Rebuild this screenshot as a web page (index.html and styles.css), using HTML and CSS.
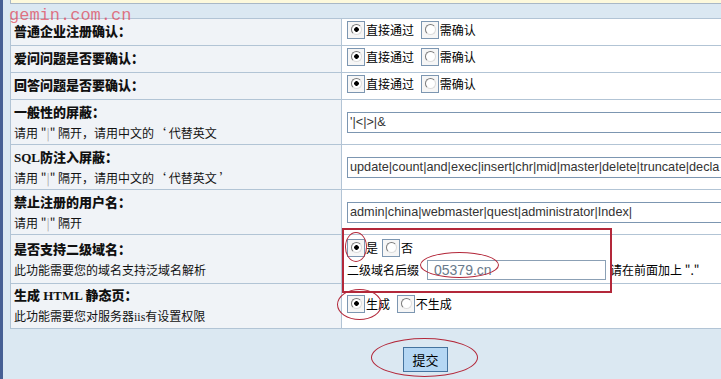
FILE: index.html
```html
<!DOCTYPE html>
<html lang="zh-CN">

<head>
	<meta charset="UTF-8">
	<title>注册设置</title>
	<link rel="stylesheet" href="styles.css">
</head>

<body>
	<div class="page">
		<div class="notice"></div>
		<table class="config">
			<colgroup>
				<col class="config__col-label">
				<col>
			</colgroup>
			<!--注册确认-->
			<tr class="row-s">
				<td class="config__label"><b>普通企业注册确认：</b></td>
				<td class="config__value">
					<label class="opt"><span class="opt__box"><input type="radio" name="r1" checked></span>直接通过</label>
					<label class="opt"><span class="opt__box"><input type="radio" name="r1"></span>需确认</label>
				</td>
			</tr>
			<tr class="row-s">
				<td class="config__label"><b>爱问问题是否要确认：</b></td>
				<td class="config__value">
					<label class="opt"><span class="opt__box"><input type="radio" name="r2" checked></span>直接通过</label>
					<label class="opt"><span class="opt__box"><input type="radio" name="r2"></span>需确认</label>
				</td>
			</tr>
			<tr class="row-s">
				<td class="config__label"><b>回答问题是否要确认：</b></td>
				<td class="config__value">
					<label class="opt"><span class="opt__box"><input type="radio" name="r3" checked></span>直接通过</label>
					<label class="opt"><span class="opt__box"><input type="radio" name="r3"></span>需确认</label>
				</td>
			</tr>
			<!--屏蔽-->
			<tr class="row-m">
				<td class="config__label">
					<b>一般性的屏蔽：</b>
					<div class="config__tip">请用 "<span class="pipe">|</span>" 隔开，请用中文的‘ 代替英文</div>
				</td>
				<td class="config__value"><input class="field" type="text" value="'|<|>|&"></td>
			</tr>
			<tr class="row-m">
				<td class="config__label">
					<b>SQL防注入屏蔽：</b>
					<div class="config__tip">请用 "<span class="pipe">|</span>" 隔开，请用中文的‘ 代替英文 ’</div>
				</td>
				<td class="config__value"><input class="field" type="text" value="update|count|and|exec|insert|chr|mid|master|delete|truncate|decla"></td>
			</tr>
			<tr class="row-m">
				<td class="config__label">
					<b>禁止注册的用户名：</b>
					<div class="config__tip">请用 "<span class="pipe">|</span>" 隔开</div>
				</td>
				<td class="config__value"><input class="field" type="text" value="admin|china|webmaster|quest|administrator|Index|"></td>
			</tr>
			<!--二级域名-->
			<tr class="row-l">
				<td class="config__label">
					<b>是否支持二级域名：</b>
					<div class="config__tip">此功能需要您的域名支持泛域名解析</div>
				</td>
				<td class="config__value">
					<div class="line">
						<label class="opt"><span class="opt__box"><input type="radio" name="r4" checked></span>是</label>
						<label class="opt"><span class="opt__box"><input type="radio" name="r4"></span>否</label>
					</div>
					<div class="line">
						<span>二级域名后缀</span>
						<input class="domain" type="text" value="05379.cn">
						<span>请在前面加上 "."</span>
					</div>
				</td>
			</tr>
			<tr class="row-m">
				<td class="config__label">
					<b>生成 HTML 静态页：</b>
					<div class="config__tip">此功能需要您对服务器<span class="latin">iis</span>有设置权限</div>
				</td>
				<td class="config__value">
					<label class="opt"><span class="opt__box"><input type="radio" name="r5" checked></span>生成</label>
					<label class="opt"><span class="opt__box"><input type="radio" name="r5"></span>不生成</label>
				</td>
			</tr>
		</table>
		<div class="submit">
			<button class="submit__btn">提交</button>
		</div>
	</div>

	<!--水印和标注-->
	<div class="mark">gemin.com.cn</div>
	<div class="note note--rect"></div>
	<div class="note note--yes"></div>
	<div class="note note--domain"></div>
	<div class="note note--html"></div>
	<div class="note note--btn"></div>
</body>

</html>
```

FILE: styles.css
```css
* {
	margin: 0;
	padding: 0;
	box-sizing: border-box;
}

body {
	position: relative;
	width: 721px;
	height: 379px;
	overflow: hidden;
	font-family: "Noto Sans CJK SC", sans-serif;
	font-size: 12px;
	color: #000;
}

.page {
	height: 379px;
	padding-left: 7px;
	border-left: 3px solid #465f94;
	background: #dbe8f2;
}

.notice {
	width: 711px;
	height: 4px;
	margin-bottom: 14px;
	background: #fdf9dc;
	border: solid 1px #a9b8c6;
	border-top: none;
	border-right: none;
}

.config {
	width: 711px;
	table-layout: fixed;
	border-collapse: collapse;
	border: solid 1px #b2c4d5;
	border-right: none;
}

.config__col-label {
	width: 331px;
}

.config td {
	border: solid 1px #b2c4d5;
	vertical-align: middle;
	overflow: hidden;
}

.config td.config__value {
	border-right: none;
}

.row-s td {
	height: 27px;
}

.row-m td {
	height: 45px;
}

.row-l td {
	height: 49px;
}

.config__label {
	padding-left: 3px;
	background: #f0f3f7;
	font-family: "Liberation Serif", "Noto Sans CJK SC", serif;
	line-height: 19px;
	color: #111;
}

.config__label b {
	font-size: 13px;
	font-weight: 900;
}

.config__tip {
	font-size: 12px;
	font-family: "Noto Sans CJK SC", sans-serif;
}

.pipe {
	color: #aaa;
}

.latin {
	font-family: "Liberation Serif", serif;
}

.config__value {
	padding-left: 5px;
	background: #fff;
	line-height: 18px;
	white-space: nowrap;
}

.opt {
	display: inline-flex;
	align-items: center;
	margin-right: 4px;
}

.opt__box {
	display: inline-block;
	width: 18px;
	height: 18px;
	margin-right: 1px;
	border: solid 1px #7c96b1;
	background: #f6f6f6;
}

.opt__box input {
	appearance: none;
	display: block;
	width: 11px;
	height: 11px;
	margin: 2px 0 0 3px;
	border-radius: 50%;
	border: solid 1px;
	border-color: #7a7a7a #dcdcdc #dcdcdc #7a7a7a;
	background: #fff;
}

.opt__box input:checked {
	background: radial-gradient(circle, #000 0, #000 2px, #fff 2.6px);
}

.field {
	display: block;
	width: 420px;
	height: 21px;
	padding: 0 2px;
	border: solid 1px #7c96b1;
	font-family: "Liberation Sans", sans-serif;
	font-size: 12.7px;
	color: #333;
}

.line {
	height: 21px;
	display: flex;
	align-items: center;
}

.line + .line {
	margin-top: 1px;
}

.domain {
	width: 179px;
	height: 20px;
	margin: 0 4px 0 8px;
	padding-left: 6px;
	border: solid 1px #8ba0b5;
	font-family: "Liberation Sans", sans-serif;
	font-size: 14px;
	color: #6a7a8c;
}

.submit {
	padding: 18px 0 0 393px;
}

.submit__btn {
	width: 45px;
	height: 25px;
	background: #b5d7f4;
	border: solid 1px #44739f;
	font-family: "Noto Sans CJK SC", sans-serif;
	font-size: 13px;
	color: #000;
}

.mark {
	position: absolute;
	left: 9px;
	top: 6px;
	font-family: "Liberation Mono", monospace;
	font-size: 17px;
	color: rgba(224, 60, 80, 0.7);
}

.note {
	position: absolute;
	border: solid 1px #b3283a;
	border-radius: 50%;
}

.note--rect {
	left: 342px;
	top: 228px;
	width: 270px;
	height: 65px;
	border-width: 2px;
	border-radius: 0;
}

.note--yes {
	left: 345px;
	top: 232px;
	width: 22px;
	height: 30px;
}

.note--domain {
	left: 420px;
	top: 252px;
	width: 79px;
	height: 26px;
}

.note--html {
	left: 337px;
	top: 289px;
	width: 45px;
	height: 31px;
}

.note--btn {
	left: 371px;
	top: 338px;
	width: 107px;
	height: 39px;
}
```
